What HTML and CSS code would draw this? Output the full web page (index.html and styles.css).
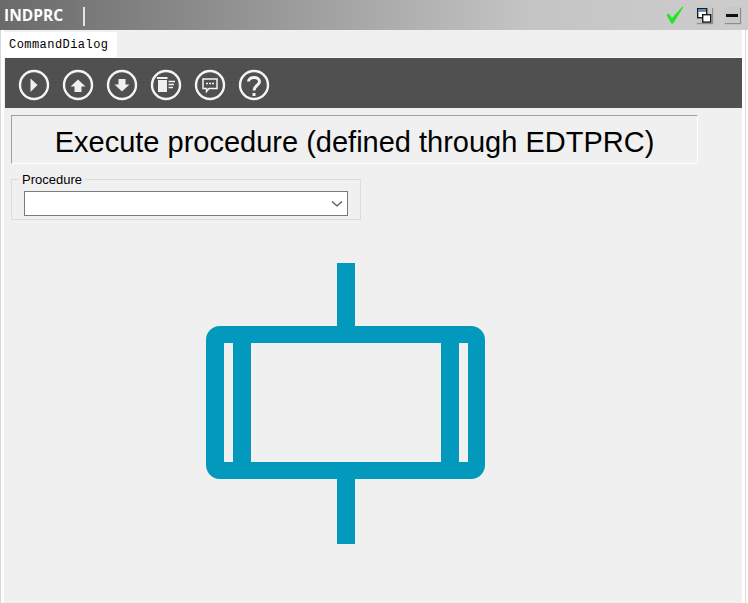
FILE: index.html
```html
<!DOCTYPE html>
<html>

<head>
    <title>INDPRC</title>
    <link rel="stylesheet" href="styles.css">
</head>

<body>
    <div class="title-bar">
        <span class="title-text">INDPRC</span>
        <span class="title-sep"></span>
        <div class="title-icons">
            <svg class="check-icon" width="18" height="18" viewBox="0 0 18 18">
                <path d="M0.5 9 L2.8 7.5 L6 12 L16.5 0.5 L17.3 1.2 L7.2 17.5 L5.4 17.5 Z" fill="#1fe81f" />
            </svg>
            <div class="win-button">
                <svg width="15" height="15" viewBox="0 0 15 15">
                    <rect x="0.7" y="0.7" width="9" height="9" fill="#fff" stroke="#1c1c1c" stroke-width="1.4" />
                    <rect x="1.4" y="1.4" width="7.6" height="2.4" fill="#4f86b8" />
                    <rect x="5.7" y="6.7" width="8" height="7.4" fill="#fff" stroke="#1c1c1c" stroke-width="1.4" />
                </svg>
            </div>
            <div class="win-button">
                <span class="min-bar"></span>
            </div>
        </div>
    </div>

    <div class="window">
        <div class="tab-strip">
            <div class="tab">CommandDialog</div>
        </div>

        <div class="toolbar">
            <svg class="tool-icon" viewBox="0 0 32 32">
                <circle cx="16" cy="16" r="14" />
                <path class="solid" d="M12.5 9.5 L19.5 16 L12.5 23 Z" />
            </svg>
            <svg class="tool-icon" viewBox="0 0 32 32">
                <circle cx="16" cy="16" r="14" />
                <path class="solid" d="M16 10.5 L23.5 17.5 L19.5 17.5 L19.5 23 L12.5 23 L12.5 17.5 L8.5 17.5 Z" />
            </svg>
            <svg class="tool-icon" viewBox="0 0 32 32">
                <circle cx="16" cy="16" r="14" />
                <path class="solid" d="M16 22.5 L23.5 15.5 L19.5 15.5 L19.5 10 L12.5 10 L12.5 15.5 L8.5 15.5 Z" />
            </svg>
            <svg class="tool-icon" viewBox="0 0 32 32">
                <circle cx="16" cy="16" r="14" />
                <path class="solid" d="M7 8 H17.5 V10 H7 Z M8 11 H17 V23 H8 Z" />
                <path class="thin" d="M18.5 12.5 H25 M18.5 15.5 H24 M18.5 18.5 H23" />
            </svg>
            <svg class="tool-icon" viewBox="0 0 32 32">
                <circle cx="16" cy="16" r="14" />
                <path class="thin" d="M9 10 H23 V19.5 H15 L12.5 22.5 V19.5 H9 Z" />
                <path class="thin" d="M12 14.5 H14 M15 14.5 H17 M18 14.5 H20" />
            </svg>
            <svg class="tool-icon" viewBox="0 0 32 32">
                <circle cx="16" cy="16" r="14" />
                <path class="thick" d="M10.5 12.5 C10.5 7 21.5 7 21.5 12.5 C21.5 16.5 16 16.5 16 21.5" />
                <rect class="solid" x="14.5" y="24" width="3" height="3" />
            </svg>
        </div>

        <div class="heading-box">Execute procedure (defined through EDTPRC)</div>

        <div class="group-box">
            <span class="group-label">Procedure</span>
            <div class="combo">
                <svg width="12" height="8" viewBox="0 0 12 8">
                    <path d="M1 1.5 L6 6 L11 1.5" fill="none" stroke="#555" stroke-width="1.3" />
                </svg>
            </div>
        </div>

        <svg class="diagram" width="280" height="281" viewBox="0 0 280 281">
            <rect x="131" y="0" width="18" height="70" fill="#0399bc" />
            <rect x="131" y="210" width="18" height="71" fill="#0399bc" />
            <path fill="#0399bc" fill-rule="evenodd" d="M14 63 H265 A14 14 0 0 1 279 77 V202 A14 14 0 0 1 265 216 H14 A14 14 0 0 1 0 202 V77 A14 14 0 0 1 14 63 Z
                M18 80 V199 H27 V80 Z
                M45 80 V199 H235 V80 Z
                M253 80 V199 H262 V80 Z" />
        </svg>
    </div>
</body>

</html>
```
FILE: styles.css
```css
html, body {
    height: 100%;
}

body {
    margin: 0;
    background: #fff;
    font-family: "Liberation Sans", Arial, sans-serif;
    color: #000;
    overflow: hidden;
}

.title-bar {
    display: flex;
    align-items: center;
    height: 30px;
    box-sizing: border-box;
    padding-left: 4px;
    background: linear-gradient(to right, #6a6a6a, #8a8a8a 25%, #c4c4c4 70%, #cdcdcd);
}

.title-text {
    width: 79px;
    font-family: "Open Sans", sans-serif;
    font-size: 15.5px;
    font-weight: 700;
    color: #fff;
}

.title-sep {
    width: 2px;
    height: 19px;
    margin-top: 3px;
    background: #e4e4e4;
}

.title-icons {
    display: flex;
    align-items: center;
    margin-left: auto;
    margin-right: 8px;
    gap: 12px;
}

.win-button {
    display: flex;
    align-items: center;
    justify-content: center;
    width: 16px;
    height: 16px;
    background: #c8c8c8;
    box-shadow: 1px 1px 1px #8e8e8e;
}

.min-bar {
    width: 12px;
    height: 3px;
    background: #111;
}

.window {
    height: 573px;
    margin: 0 6px 0 4px;
    box-sizing: border-box;
    background: #f0f0f0;
    box-shadow: -3px 0 0 #fff, -4px 0 0 #d8d8d8, 3px 0 0 #fff, 4px 0 0 #dcdcdc;
}

.tab-strip {
    height: 28px;
    padding-top: 2px;
    border-bottom: 1px solid #f8f8f8;
    box-sizing: border-box;
}

.tab {
    width: 116px;
    height: 25px;
    margin-left: -3px;
    padding-left: 8px;
    background: #fff;
    font-family: "Liberation Mono", monospace;
    font-size: 12px;
    letter-spacing: 0.45px;
    line-height: 26px;
    box-sizing: border-box;
}

.toolbar {
    display: flex;
    align-items: center;
    gap: 12px;
    height: 50px;
    margin-left: 1px;
    padding: 4px 0 0 13px;
    background: #505050;
    box-sizing: border-box;
}

.tool-icon {
    width: 32px;
    height: 32px;
    fill: none;
    stroke: #f4f4f4;
    stroke-width: 2.4;
}

.tool-icon .solid {
    fill: #f0f0f0;
    stroke: none;
}

.tool-icon .thin {
    stroke-width: 1.5;
}

.tool-icon .thick {
    stroke-width: 3;
}

.heading-box {
    width: 687px;
    height: 49px;
    margin: 7px 0 0 7px;
    border-top: 1px solid #a0a0a0;
    border-left: 1px solid #a0a0a0;
    border-right: 1px solid #fff;
    border-bottom: 1px solid #fff;
    box-sizing: border-box;
    font-size: 29px;
    line-height: 52px;
    text-align: center;
    white-space: nowrap;
}

.group-box {
    position: relative;
    width: 350px;
    height: 41px;
    margin: 15px 0 0 7px;
    padding: 11px 0 0 12px;
    border: 1px solid #dcdcdc;
    box-sizing: border-box;
}

.group-label {
    position: absolute;
    top: -7px;
    left: 7px;
    padding: 0 3px;
    background: #f0f0f0;
    font-size: 13px;
    line-height: 14px;
}

.combo {
    display: flex;
    align-items: center;
    justify-content: flex-end;
    width: 324px;
    height: 25px;
    padding-right: 4px;
    border: 1px solid #7a7a7a;
    background: #fff;
    box-sizing: border-box;
}

.diagram {
    display: block;
    margin: 43px 0 0 202px;
}
```
